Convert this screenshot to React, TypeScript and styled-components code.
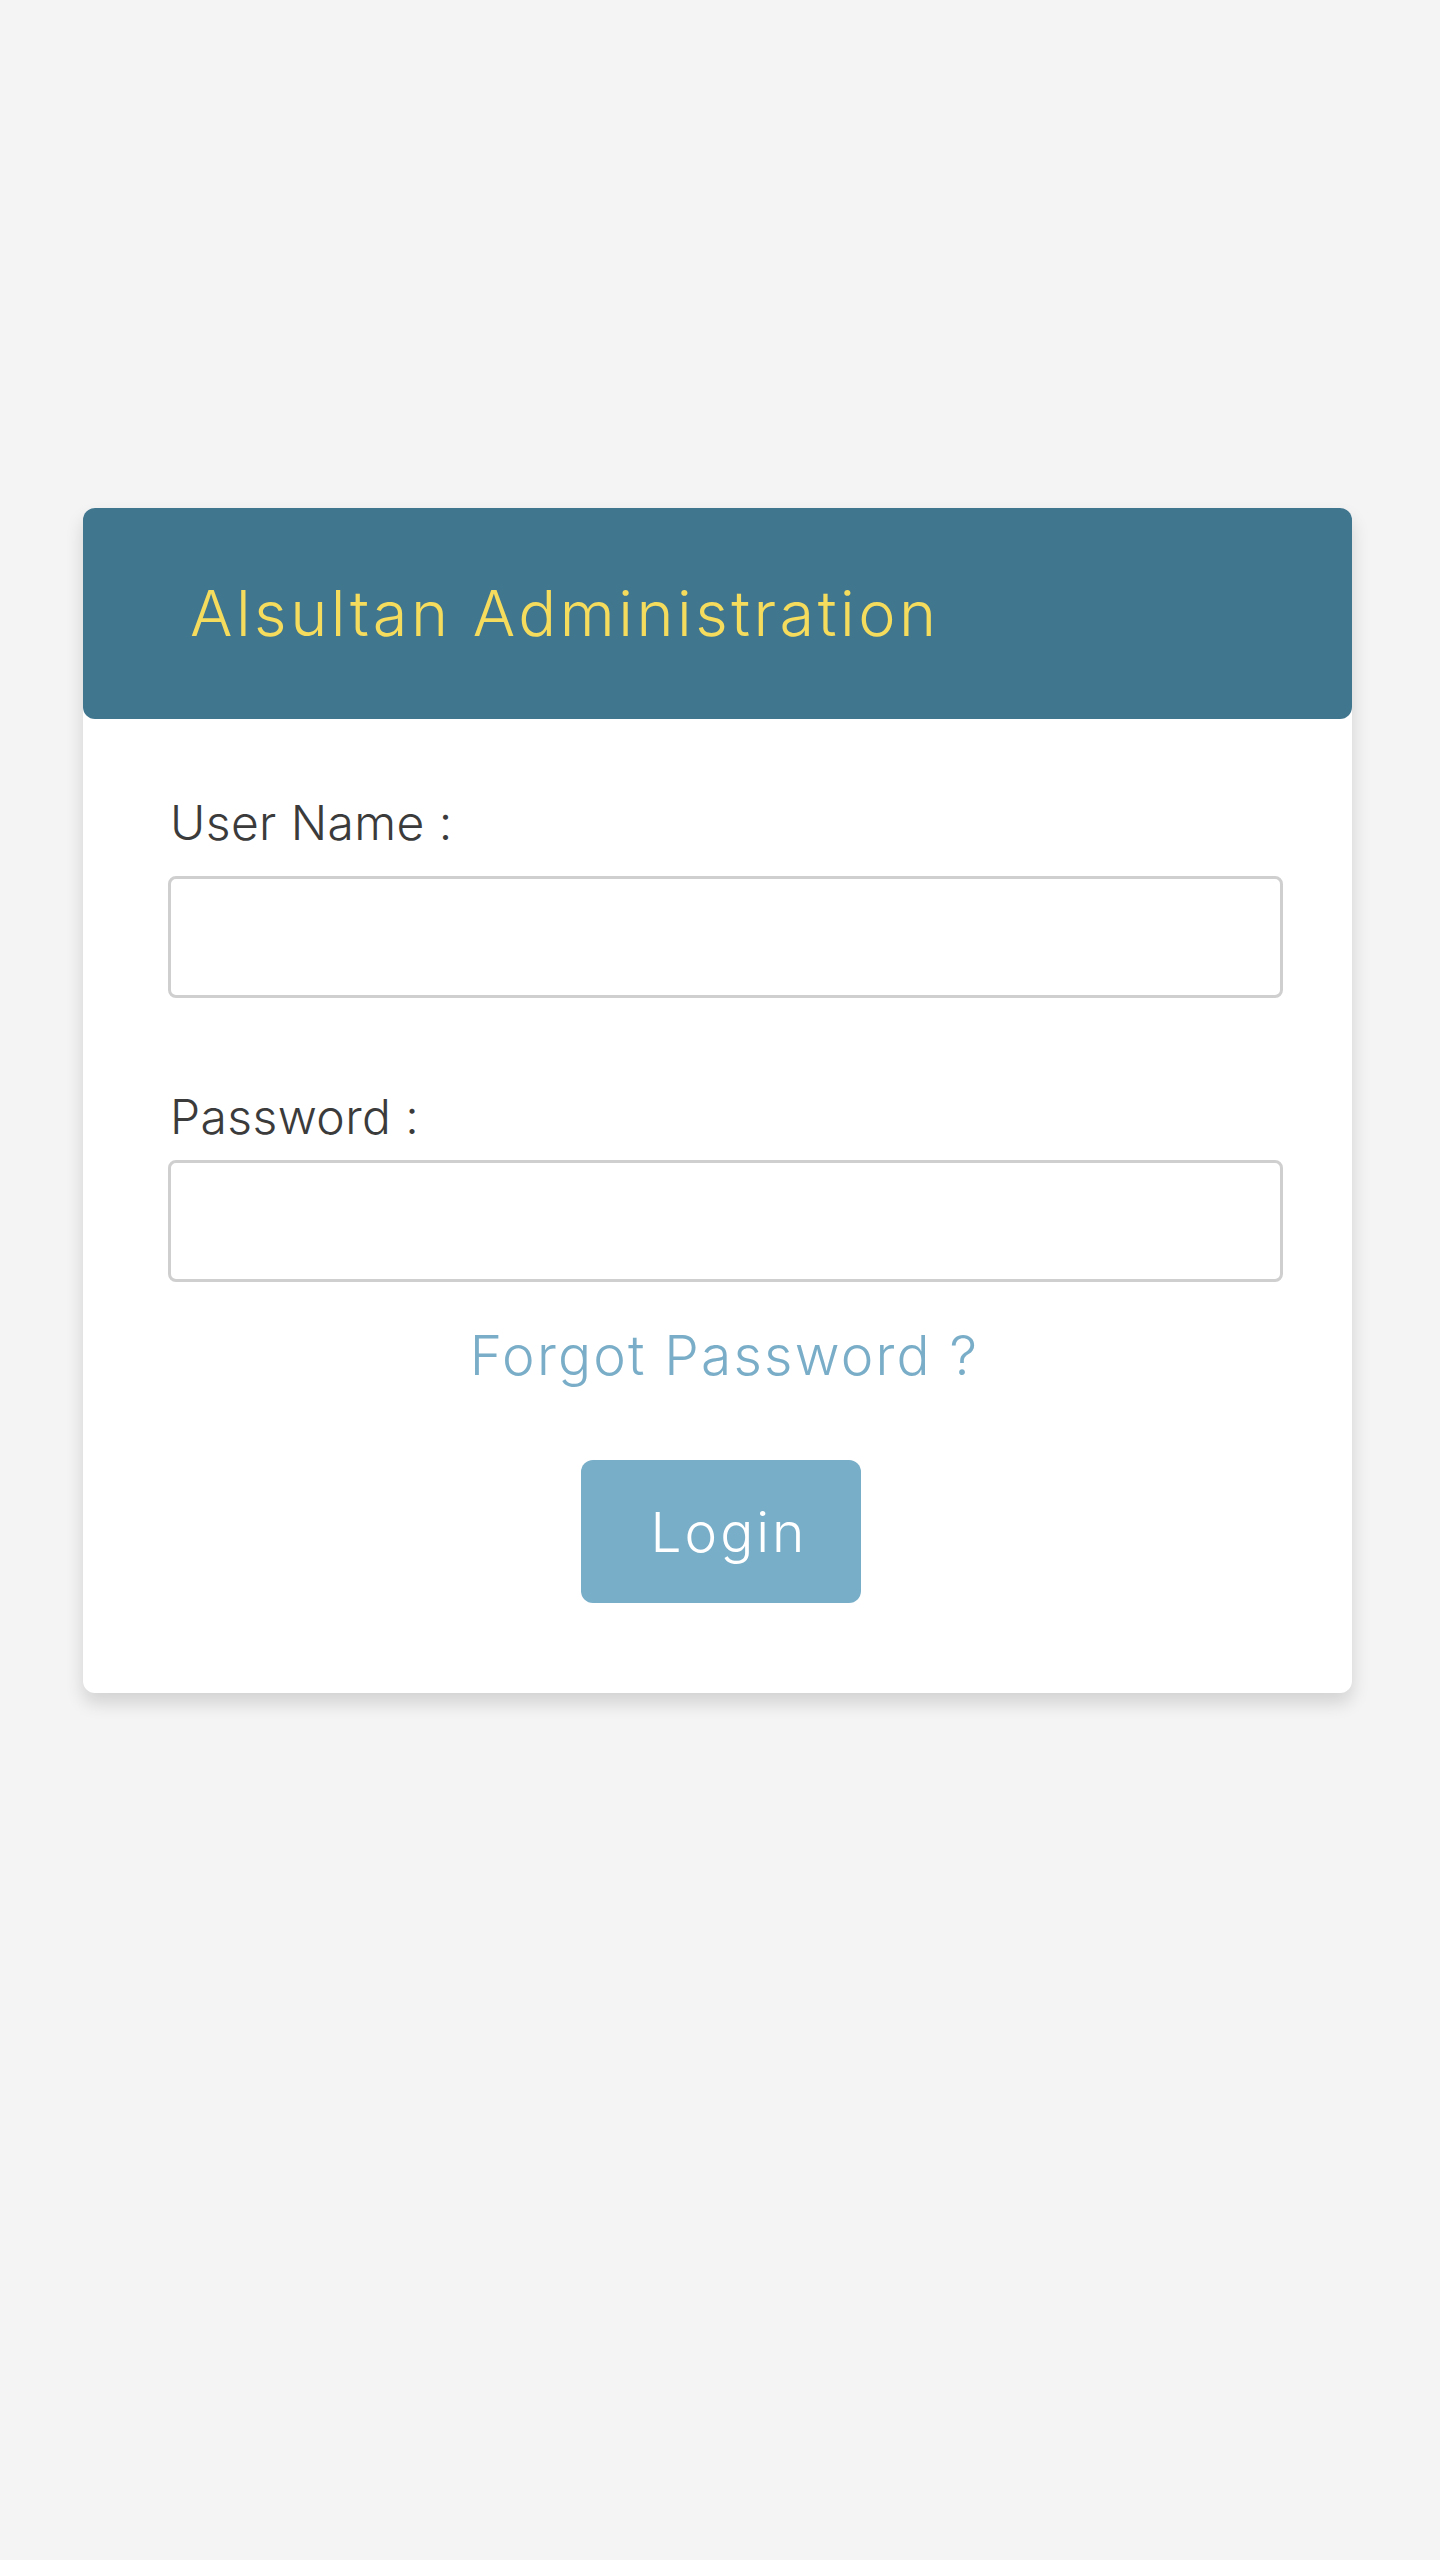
import React, { useState } from "react";
import styled, { createGlobalStyle } from "styled-components";

const GlobalStyle = createGlobalStyle`
  html, body {
    margin: 0;
    padding: 0;
    background: #f4f4f4;
    font-family: Inter, "Open Sans", Arial, sans-serif;
  }
`;

const colors = {
  page: "#f4f4f4",
  header: "#41768f",
  title: "#f6dc5c",
  label: "#3b3b3b",
  border: "#cfcfcf",
  link: "#7aaec8",
  button: "#78aec8",
};

const App = () => {
  const [userName, setUserName] = useState("");
  const [password, setPassword] = useState("");

  return (
    <Page>
      <GlobalStyle />
      <Card>
        <Header>
          <Title>Alsultan Administration</Title>
        </Header>
        <Form onSubmit={(e) => e.preventDefault()}>
          <Field>
            <Label htmlFor="username">User Name :</Label>
            <Input
              id="username"
              value={userName}
              onChange={(e) => setUserName(e.target.value)}
            />
          </Field>
          <Field spaced>
            <Label htmlFor="password" tight>
              Password :
            </Label>
            <Input
              id="password"
              type="password"
              value={password}
              onChange={(e) => setPassword(e.target.value)}
            />
          </Field>
          <ForgotLink href="#">Forgot Password ?</ForgotLink>
          <LoginButton type="submit">Login</LoginButton>
        </Form>
      </Card>
    </Page>
  );
};

const Page = styled.div`
  min-height: 2560px;
  box-sizing: border-box;
  padding: 508px 88px 0 83px;
  background: ${colors.page};
`;

const Card = styled.div`
  width: 1269px;
  background: #ffffff;
  border-radius: 12px;
  box-shadow: 0 10px 18px rgba(0, 0, 0, 0.14);
  padding-bottom: 90px;
`;

const Header = styled.div`
  display: flex;
  align-items: center;
  height: 211px;
  padding-left: 107px;
  background: ${colors.header};
  border-radius: 12px;
`;

const Title = styled.h1`
  margin: 0;
  color: ${colors.title};
  font-family: Inter, sans-serif;
  font-weight: 300;
  font-size: 63px;
  line-height: 1;
  letter-spacing: 3.5px;
`;

const Form = styled.form`
  display: flex;
  flex-direction: column;
  align-items: center;
  padding: 75px 69px 0 85px;
`;

const Field = styled.div<{ spaced?: boolean }>`
  display: flex;
  flex-direction: column;
  align-self: stretch;
  margin-top: ${(p) => (p.spaced ? "90px" : "0")};
`;

const Label = styled.label<{ tight?: boolean }>`
  color: ${colors.label};
  font-family: Inter, sans-serif;
  font-weight: 350;
  font-size: 48px;
  line-height: 58px;
  letter-spacing: 0.4px;
  margin-left: 2px;
  margin-bottom: ${(p) => (p.tight ? "14px" : "24px")};
`;

const Input = styled.input`
  box-sizing: border-box;
  height: 122px;
  width: 100%;
  border: 3px solid ${colors.border};
  border-radius: 8px;
  padding: 0 24px;
  font-size: 44px;
  font-family: Inter, sans-serif;
  outline: none;
`;

const ForgotLink = styled.a`
  margin-top: 40px;
  color: ${colors.link};
  font-family: Inter, sans-serif;
  font-weight: 300;
  font-size: 55px;
  line-height: 66px;
  letter-spacing: 2.2px;
  text-decoration: none;
  margin-left: -2px;
`;

const LoginButton = styled.button`
  margin-top: 72px;
  margin-left: -9px;
  width: 280px;
  height: 143px;
  padding: 0 0 0 16px;
  border: none;
  border-radius: 12px;
  background: ${colors.button};
  color: #ffffff;
  font-family: Inter, sans-serif;
  font-weight: 300;
  font-size: 55px;
  letter-spacing: 3px;
  cursor: pointer;
`;

export default App;
